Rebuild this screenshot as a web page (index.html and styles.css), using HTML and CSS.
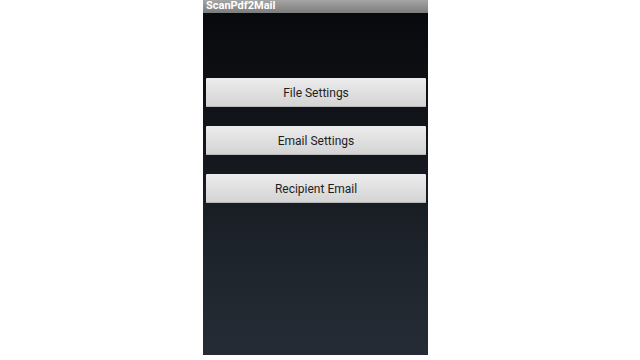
FILE: index.html
```html
<!DOCTYPE html>
<html lang="en">
<head>
  <meta charset="UTF-8">
  <meta name="viewport" content="width=device-width, initial-scale=1.0">
  <title>ScanPdf2Mail</title>
  <link rel="stylesheet" href="styles.css">
</head>
<body>
  <div class="phone">
    <div class="title-bar">ScanPdf2Mail</div>
    <div class="menu">
      <button class="menu-btn">File Settings</button>
      <button class="menu-btn">Email Settings</button>
      <button class="menu-btn">Recipient Email</button>
    </div>
  </div>
</body>
</html>
```

FILE: styles.css
```css
body {
  margin: 0;
  background-color: #fff;
  font-family: Roboto, "Liberation Sans", sans-serif;
}

.phone {
  width: 225px;
  height: 355px;
  margin-left: 203px;
  display: flex;
  flex-direction: column;
  background: linear-gradient(to bottom, #07080b 0%, #111419 35%, #1f252d 75%, #252c35 100%);
}

.title-bar {
  height: 13px;
  line-height: 12px;
  padding-left: 3px;
  font-size: 11px;
  font-weight: bold;
  color: #fff;
  background: linear-gradient(to bottom, #a5a5a5, #7c7c7c);
}

.menu {
  display: flex;
  flex-direction: column;
  gap: 19px;
  padding: 65px 2px 0 3px;
}

.menu-btn {
  height: 29px;
  border: none;
  border-radius: 1px;
  padding: 0;
  font-family: inherit;
  font-size: 12px;
  color: #1e1e1e;
  background: linear-gradient(to bottom, #ececec, #d3d3d3);
  box-shadow: inset 0 -1px 0 #b8b8b8;
}
```
